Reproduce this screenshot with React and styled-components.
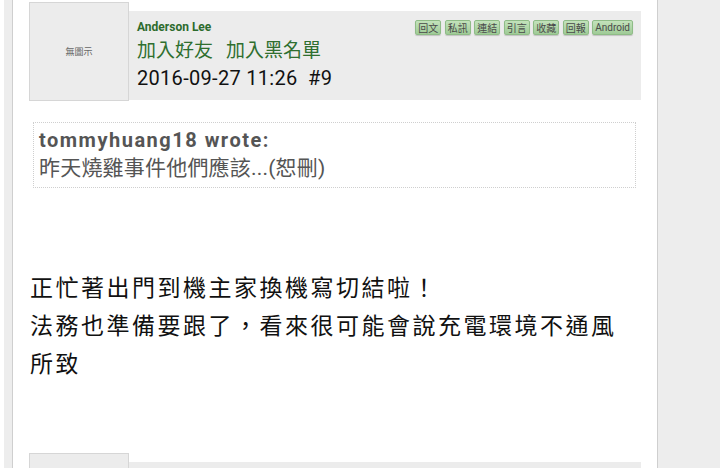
import React from 'react'
import styled, { createGlobalStyle } from 'styled-components'

const GlobalStyle = createGlobalStyle`
    *, *::before, *::after {
        box-sizing: border-box;
    }
    html, body {
        margin: 0;
        padding: 0;
        background: #ffffff;
        font-family: Roboto, "Noto Sans CJK TC", sans-serif;
        overflow: hidden;
    }
`

const Page = styled.div`
    display: flex;
    height: 468px;
    padding-left: 4px;
    background: #fff;
`

const LeftRail = styled.div`
    width: 9px;
    background: #ededed;
    border-right: 1px solid #cfcfcf;
`

const Content = styled.div`
    width: 645px;
    padding: 2px 16px 0 16px;
    border-right: 1px solid #cfcfcf;
    overflow: hidden;
`

const RightRail = styled.div`
    flex: 1;
    background: #ededed;
`

const PostHeader = styled.div`
    display: flex;
    align-items: flex-start;
`

const Avatar = styled.div`
    width: 100px;
    height: 99px;
    flex-shrink: 0;
    display: flex;
    align-items: center;
    justify-content: center;
    background: #ececec;
    border: 1px solid #d6d6d6;
    font-size: 9px;
    color: #666;
`

const HeaderBox = styled.div`
    flex: 1;
    height: 89px;
    margin-top: 9px;
    padding: 8px 8px 0 8px;
    background: #ececec;
    display: flex;
    justify-content: space-between;
    align-items: flex-start;
`

const Info = styled.div`
    display: flex;
    flex-direction: column;
`

const Name = styled.div`
    font-size: 12px;
    font-weight: bold;
    color: #2d6b2d;
    line-height: 14px;
    margin-top: 1px;
`

const Links = styled.div`
    display: flex;
    gap: 13px;
    font-size: 19px;
    line-height: 26px;
    color: #2f6f2f;
    margin-top: 4px;
`

const Stamp = styled.div`
    font-size: 20px;
    letter-spacing: 0.3px;
    line-height: 26px;
    color: #111;
    white-space: pre;
    margin-top: 1px;
`

const Buttons = styled.div`
    display: flex;
    gap: 3.5px;
    margin-top: 0.5px;
`

const Button = styled.span`
    display: inline-flex;
    align-items: center;
    justify-content: center;
    height: 15px;
    padding: 0 2px;
    font-size: 10px;
    color: #4a4a4a;
    background: linear-gradient(#c3e2bb, #9fcb97);
    border: 1px solid #8fbc87;
    border-radius: 2px;
    box-shadow: 0 1px 1px rgba(0, 0, 0, 0.18);
`

const Quote = styled.div`
    margin: 21px 5px 0 4px;
    height: 66px;
    padding: 5px 6px 0 5px;
    border: 1px dotted #cfcfcf;
    color: #555;
`

const QuoteTitle = styled.div`
    font-size: 20px;
    font-weight: bold;
    letter-spacing: 1.5px;
    line-height: 24px;
`

const QuoteBody = styled.div`
    font-size: 21px;
    letter-spacing: 0.2px;
    line-height: 32px;
`

const Message = styled.div`
    margin: 82px 18px 0 1px;
    height: 114px;
    font-size: 23px;
    letter-spacing: 2.5px;
    line-height: 38px;
    color: #111;
`

const NextPost = styled.div`
    margin-top: 69px;
`

const buttons = ['回文', '私訊', '連結', '引言', '收藏', '回報', 'Android']

const App = () => {
    return (
        <>
            <GlobalStyle />
            <Page>
                <LeftRail />
                <Content>
                    <PostHeader>
                        <Avatar>無圖示</Avatar>
                        <HeaderBox>
                            <Info>
                                <Name>Anderson Lee</Name>
                                <Links>
                                    <span>加入好友</span>
                                    <span>加入黑名單</span>
                                </Links>
                                <Stamp>2016-09-27 11:26  #9</Stamp>
                            </Info>
                            <Buttons>
                                {buttons.map(b => (
                                    <Button key={b}>{b}</Button>
                                ))}
                            </Buttons>
                        </HeaderBox>
                    </PostHeader>
                    <Quote>
                        <QuoteTitle>tommyhuang18 wrote:</QuoteTitle>
                        <QuoteBody>昨天燒雞事件他們應該...(恕刪)</QuoteBody>
                    </Quote>
                    <Message>
                        正忙著出門到機主家換機寫切結啦！<br />
                        法務也準備要跟了，看來很可能會說充電環境不通風所致
                    </Message>
                    <NextPost>
                        <PostHeader>
                            <Avatar />
                            <HeaderBox />
                        </PostHeader>
                    </NextPost>
                </Content>
                <RightRail />
            </Page>
        </>
    )
}

export default App
